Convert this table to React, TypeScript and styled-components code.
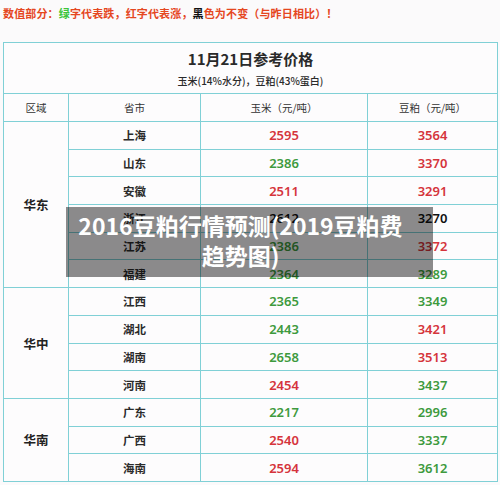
import React from "react";
import styled, { createGlobalStyle } from "styled-components";

const Global = createGlobalStyle`
  html, body { margin: 0; padding: 0; background: #fbfafb; }
  body { font-family: "Noto Sans CJK SC", "Noto Sans", sans-serif; }
`;

const Page = styled.div`
  position: relative;
  width: 500px;
  height: 485px;
  overflow: hidden;
  background: #fbfafb;
`;

const Note = styled.div`
  margin: 6px 0 0 3px;
  height: 14px;
  line-height: 14px;
  font-size: 11px;
  letter-spacing: 0.15px;
  font-weight: 700;
  color: #e5471f;
  white-space: nowrap;
`;

const Tint = styled.span<{ $c: string }>`
  color: ${(p) => p.$c};
`;

const Table = styled.div`
  margin: 22px 0 0 3px;
  width: 493px;
  border: 1px solid #80d0d6;
  background: #fdfcfd;
`;

const Caption = styled.div`
  height: 50px;
  border-bottom: 1px solid #80d0d6;
  display: flex;
  flex-direction: column;
  align-items: center;
  color: #2a2a2a;
`;

const Title = styled.div`
  margin-top: 5px;
  font-size: 15px;
  font-weight: 700;
  line-height: 22px;
`;

const Sub = styled.div`
  margin-top: 4px;
  font-size: 10px;
  font-weight: 500;
  line-height: 14px;
`;

const Grid = styled.div`
  display: grid;
  grid-template-columns: 64px 131px 166px 129px;
  grid-template-rows: 27px;
  grid-auto-rows: 26.7px;
  gap: 1px;
  background: #80d0d6;
`;

const Cell = styled.div`
  background: #fdfcfd;
  display: flex;
  align-items: center;
  justify-content: center;
  white-space: nowrap;
`;

const Head = styled(Cell)`
  font-size: 10.5px;
  color: #333;
`;

const Region = styled(Cell)<{ $span: number }>`
  grid-row: span ${(p) => p.$span};
  font-size: 12.5px;
  font-weight: 600;
  color: #222;
`;

const Prov = styled(Cell)`
  font-size: 11.5px;
  font-weight: 700;
  color: #2b2b2b;
`;

const Num = styled(Cell)<{ $t: "r" | "g" | "k" }>`
  font-family: "Noto Sans", "Open Sans", sans-serif;
  font-size: 13px;
  font-weight: 600;
  color: ${(p) => (p.$t === "r" ? "#d5343c" : p.$t === "g" ? "#3e9a3e" : "#111")};
`;

const Overlay = styled.div`
  position: absolute;
  left: 66px;
  top: 207px;
  width: 367px;
  height: 70px;
  box-sizing: border-box;
  padding: 3px 20px 0 2px;
  background: rgba(0, 0, 0, 0.45);
  color: #fff;
  font-size: 23px;
  font-weight: 700;
  line-height: 30px;
  text-align: center;
  white-space: nowrap;
`;

type T = "r" | "g" | "k";
type Row = [string, string, T, string, T];
const groups: { name: string; rows: Row[] }[] = [
  {
    name: "华东",
    rows: [
      ["上海", "2595", "r", "3564", "r"],
      ["山东", "2386", "g", "3370", "r"],
      ["安徽", "2511", "r", "3291", "r"],
      ["浙江", "2612", "k", "3270", "k"],
      ["江苏", "2386", "g", "3372", "r"],
      ["福建", "2364", "g", "3289", "g"],
    ],
  },
  {
    name: "华中",
    rows: [
      ["江西", "2365", "g", "3349", "g"],
      ["湖北", "2443", "g", "3421", "r"],
      ["湖南", "2658", "g", "3513", "r"],
      ["河南", "2454", "r", "3437", "g"],
    ],
  },
  {
    name: "华南",
    rows: [
      ["广东", "2217", "g", "2996", "g"],
      ["广西", "2540", "r", "3337", "g"],
      ["海南", "2594", "r", "3612", "g"],
    ],
  },
];

export default function App() {
  return (
    <Page>
      <Global />
      <Note>
        数值部分：<Tint $c="#3cc43c">绿</Tint>字代表跌，红字代表涨，<Tint $c="#111">黑</Tint>色为不变（与昨日相比）！
      </Note>
      <Table>
        <Caption>
          <Title>11月21日参考价格</Title>
          <Sub>玉米(14%水分)，豆粕(43%蛋白)</Sub>
        </Caption>
        <Grid>
          <Head>区域</Head>
          <Head>省市</Head>
          <Head>玉米（元/吨）</Head>
          <Head>豆粕（元/吨）</Head>
          {groups.map((g) => (
            <React.Fragment key={g.name}>
              <Region $span={g.rows.length}>{g.name}</Region>
              {g.rows.map((r) => (
                <React.Fragment key={r[0]}>
                  <Prov>{r[0]}</Prov>
                  <Num $t={r[2]}>{r[1]}</Num>
                  <Num $t={r[4]}>{r[3]}</Num>
                </React.Fragment>
              ))}
            </React.Fragment>
          ))}
        </Grid>
      </Table>
      <Overlay>
        2016豆粕行情预测(2019豆粕费
        <br />
        趋势图)
      </Overlay>
    </Page>
  );
}
